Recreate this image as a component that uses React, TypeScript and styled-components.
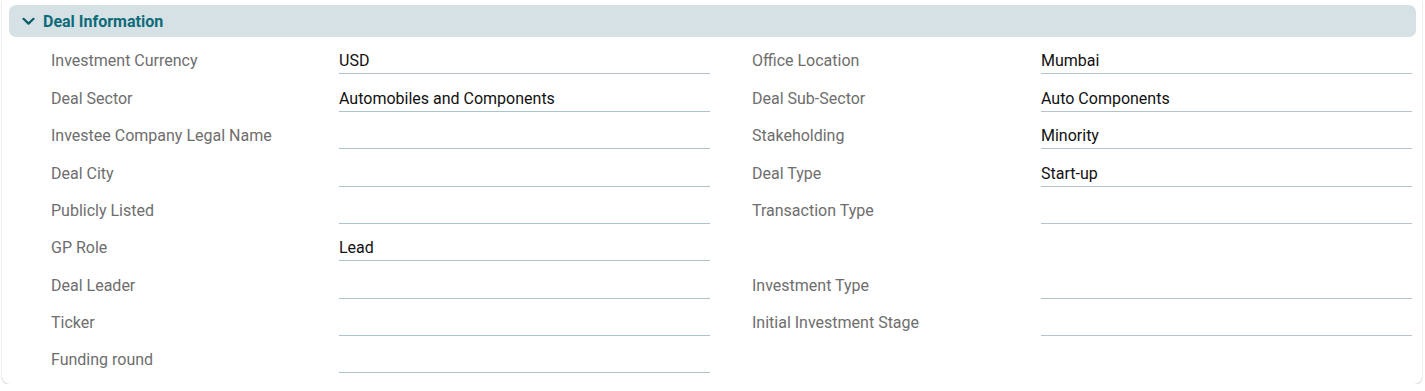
import React from "react";
import styled, { createGlobalStyle } from "styled-components";

const GlobalStyle = createGlobalStyle`
  body {
    margin: 0;
    background: #ffffff;
    font-family: Roboto, "Liberation Sans", sans-serif;
  }
`;

const Page = styled.div`
  padding: 0 3px 0 2px;
`;

const Card = styled.section`
  background: #ffffff;
  border-radius: 0 0 8px 8px;
  box-shadow: 0 1px 2px rgba(0, 0, 0, 0.18), 0 0 1px rgba(0, 0, 0, 0.12);
  padding: 5px 6px 11px 7px;
`;

const Header = styled.div`
  height: 32px;
  display: flex;
  align-items: center;
  gap: 8px;
  padding-left: 13px;
  background: #d6e1e6;
  border-radius: 7px;
  color: #0d6b78;
  font-size: 16px;
  font-weight: 700;
`;

const Grid = styled.div`
  display: grid;
  grid-template-columns: 659px 660px;
  column-gap: 42px;
  padding-left: 42px;
`;

type FieldProps = {
  $labelWidth: number;
};

const Field = styled.div<FieldProps>`
  height: 37.375px;
  display: grid;
  grid-template-columns: ${(p) => p.$labelWidth}px 1fr;
  align-items: end;
`;

const Label = styled.div`
  color: #6e6e6e;
  font-size: 16px;
  line-height: 20px;
  padding-bottom: 3px;
`;

type ValueProps = {
  $tone?: string;
};

const Value = styled.div<ValueProps>`
  color: #111111;
  font-size: 16px;
  line-height: 20px;
  height: 20px;
  padding-bottom: 2px;
  border-bottom: 1px solid ${(p) => p.$tone || "#adc3cb"};
`;

const Chevron = () => (
  <svg width="13" height="9" viewBox="0 0 13 9" fill="none">
    <path
      d="M1.5 1.8 L6.5 6.6 L11.5 1.8"
      stroke="#0b5a68"
      strokeWidth="2.2"
      strokeLinecap="round"
      strokeLinejoin="round"
    />
  </svg>
);

type Item = { label: string; value: string } | null;

const rows: [Item, Item][] = [
  [
    { label: "Investment Currency", value: "USD" },
    { label: "Office Location", value: "Mumbai" },
  ],
  [
    { label: "Deal Sector", value: "Automobiles and Components" },
    { label: "Deal Sub-Sector", value: "Auto Components" },
  ],
  [
    { label: "Investee Company Legal Name", value: "" },
    { label: "Stakeholding", value: "Minority" },
  ],
  [
    { label: "Deal City", value: "" },
    { label: "Deal Type", value: "Start-up" },
  ],
  [
    { label: "Publicly Listed", value: "" },
    { label: "Transaction Type", value: "" },
  ],
  [{ label: "GP Role", value: "Lead" }, null],
  [
    { label: "Deal Leader", value: "" },
    { label: "Investment Type", value: "" },
  ],
  [
    { label: "Ticker", value: "" },
    { label: "Initial Investment Stage", value: "" },
  ],
  [{ label: "Funding round", value: "" }, null],
];

const DealInformation = () => (
  <Card>
    <Header>
      <Chevron />
      Deal Information
    </Header>
    <Grid>
      {rows.map((pair, i) =>
        pair.map((item, j) =>
          item ? (
            <Field key={`${i}-${j}`} $labelWidth={j === 1 ? 289 : 288}>
              <Label>{item.label}</Label>
              <Value $tone={j === 1 ? "#b2c4c7" : undefined}>{item.value}</Value>
            </Field>
          ) : (
            <Field key={`${i}-${j}`} $labelWidth={288} />
          )
        )
      )}
    </Grid>
  </Card>
);

export default function App() {
  return (
    <Page>
      <GlobalStyle />
      <DealInformation />
    </Page>
  );
}
